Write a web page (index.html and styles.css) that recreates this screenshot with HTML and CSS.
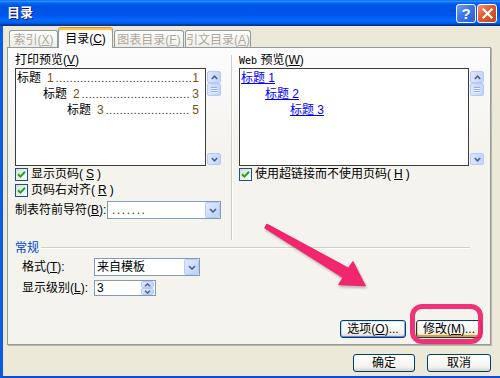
FILE: index.html
```html
<!doctype html>
<html lang="zh-CN">
  <head>
    <meta charset="UTF-8" />
    <title>目录</title>
    <link rel="stylesheet" href="styles.css">
  </head>
  <body>
    <div class="window">
      <!-- 标题栏 -->
      <div class="titlebar">
        <div class="title">目录</div>
        <div class="caption-buttons">
          <div class="cap-btn help">?</div>
          <div class="cap-btn close">
            <svg width="11" height="11" viewBox="0 0 11 11"><path d="M1.5 1.5 L9.5 9.5 M9.5 1.5 L1.5 9.5" stroke="#fff" stroke-width="2.2" stroke-linecap="square" fill="none"/></svg>
          </div>
        </div>
      </div>

      <div class="client">
        <!-- 选项卡 -->
        <div class="tabs">
          <div class="tab disabled tab-index">索引(<u>X</u>)</div>
          <div class="tab active tab-toc">目录(<u>C</u>)</div>
          <div class="tab disabled tab-figures">图表目录(<u>F</u>)</div>
          <div class="tab disabled tab-cites">引文目录(<u>A</u>)</div>
        </div>

        <div class="panel">
          <div class="previews">
            <!-- 打印预览 -->
            <div class="col col-print">
              <div class="label">打印预览(<u>V</u>)</div>
              <div class="preview-row">
                <div class="preview-box print-box">
                  <div class="toc-line level-1"><span class="toc-title">标题<em>1</em></span><span class="toc-dots">.......................................</span><span class="toc-page">1</span></div>
                  <div class="toc-line level-2"><span class="toc-title">标题<em>2</em></span><span class="toc-dots">...............................</span><span class="toc-page">3</span></div>
                  <div class="toc-line level-3"><span class="toc-title">标题<em>3</em></span><span class="toc-dots">........................</span><span class="toc-page">5</span></div>
                </div>
                <div class="scrollbar">
                  <div class="scroll-btn"><svg width="7" height="5" viewBox="0 0 7 5"><path d="M0.8 4 L3.5 1.2 L6.2 4" stroke="#4D6185" stroke-width="1.6" fill="none"/></svg></div>
                  <div class="scroll-thumb"><i></i><i></i><i></i></div>
                  <div class="scroll-space"></div>
                  <div class="scroll-btn"><svg width="7" height="5" viewBox="0 0 7 5"><path d="M0.8 1 L3.5 3.8 L6.2 1" stroke="#4D6185" stroke-width="1.6" fill="none"/></svg></div>
                </div>
              </div>
              <div class="check-row">
                <span class="checkbox"><svg width="9" height="9" viewBox="0 0 9 9"><path d="M1 4.2 L3.4 6.6 L8 1.8" stroke="#21A121" stroke-width="2" fill="none"/></svg></span>
                显示页码(<u>S</u>)
              </div>
              <div class="check-row">
                <span class="checkbox"><svg width="9" height="9" viewBox="0 0 9 9"><path d="M1 4.2 L3.4 6.6 L8 1.8" stroke="#21A121" stroke-width="2" fill="none"/></svg></span>
                页码右对齐(<u>R</u>)
              </div>
              <div class="leader-row">
                <span>制表符前导符(<u>B</u>):</span>
                <div class="combo leader-combo">
                  <span class="combo-text dots">.......</span>
                  <span class="combo-btn"><svg width="8" height="5" viewBox="0 0 8 5"><path d="M1 1 L4 4 L7 1" stroke="#4D6185" stroke-width="1.6" fill="none"/></svg></span>
                </div>
              </div>
            </div>

            <div class="vsep"></div>

            <!-- Web 预览 -->
            <div class="col col-web">
              <div class="label"><span class="web">Web</span> 预览(<u>W</u>)</div>
              <div class="preview-row">
                <div class="preview-box web-box">
                  <div class="web-line level-1"><a>标题 1</a></div>
                  <div class="web-line level-2"><a>标题 2</a></div>
                  <div class="web-line level-3"><a>标题 3</a></div>
                </div>
                <div class="scrollbar">
                  <div class="scroll-btn"><svg width="7" height="5" viewBox="0 0 7 5"><path d="M0.8 4 L3.5 1.2 L6.2 4" stroke="#4D6185" stroke-width="1.6" fill="none"/></svg></div>
                  <div class="scroll-thumb"><i></i><i></i><i></i></div>
                  <div class="scroll-space"></div>
                  <div class="scroll-btn"><svg width="7" height="5" viewBox="0 0 7 5"><path d="M0.8 1 L3.5 3.8 L6.2 1" stroke="#4D6185" stroke-width="1.6" fill="none"/></svg></div>
                </div>
              </div>
              <div class="check-row">
                <span class="checkbox"><svg width="9" height="9" viewBox="0 0 9 9"><path d="M1 4.2 L3.4 6.6 L8 1.8" stroke="#21A121" stroke-width="2" fill="none"/></svg></span>
                使用超链接而不使用页码(<u>H</u>)
              </div>
            </div>
          </div>

          <!-- 常规 -->
          <div class="group-title"><span>常规</span><span class="group-line"></span></div>

          <div class="form">
            <div class="form-row row-format">
              <span class="form-label">格式(<u>T</u>):</span>
              <div class="combo format-combo">
                <span class="combo-text">来自模板</span>
                <span class="combo-btn"><svg width="8" height="5" viewBox="0 0 8 5"><path d="M1 1 L4 4 L7 1" stroke="#4D6185" stroke-width="1.6" fill="none"/></svg></span>
              </div>
            </div>
            <div class="form-row row-level">
              <span class="form-label">显示级别(<u>L</u>):</span>
              <div class="spinner">
                <span class="combo-text">3</span>
                <span class="spin-btns">
                  <span class="spin-btn"><svg width="7" height="4" viewBox="0 0 7 4"><path d="M1 3.3 L3.5 0.9 L6 3.3" stroke="#4D6185" stroke-width="1.4" fill="none"/></svg></span>
                  <span class="spin-btn"><svg width="7" height="4" viewBox="0 0 7 4"><path d="M1 0.7 L3.5 3.1 L6 0.7" stroke="#4D6185" stroke-width="1.4" fill="none"/></svg></span>
                </span>
              </div>
            </div>
          </div>

          <div class="panel-buttons">
            <button class="btn btn-options">选项(<u>O</u>)...</button>
            <button class="btn btn-modify">修改(<u>M</u>)...</button>
          </div>
        </div>

        <div class="dialog-buttons">
          <button class="btn btn-ok">确定</button>
          <button class="btn btn-cancel">取消</button>
        </div>
      </div>

      <!-- 标注：箭头和圈 -->
      <svg class="arrow" width="500" height="378" viewBox="0 0 500 378">
        <polygon points="267,224.5 348.5,268.5 353,262 365,285.5 339,284.5 343.5,277.5 265,227.8" fill="#F2266C" stroke="#F2266C" stroke-width="1.5" stroke-linejoin="round"/>
      </svg>
      <div class="ring"></div>
    </div>
  </body>
</html>
```

FILE: styles.css
```css
* {
  margin: 0;
  padding: 0;
  box-sizing: border-box;
}

body {
  width: 500px;
  height: 378px;
  overflow: hidden;
  font-family: "Liberation Sans", "Noto Sans CJK SC", sans-serif;
  font-size: 12px;
  line-height: 14px;
  color: #000;
  background: #ECE9D8;
}

u {
  text-decoration: underline;
}

button {
  font: inherit;
  color: inherit;
}

.window {
  position: relative;
  width: 500px;
  height: 378px;
  background: #ECE9D8;
}

/* 标题栏 */
.titlebar {
  height: 26px;
  display: flex;
  justify-content: space-between;
  padding: 0 3px 0 7px;
  background: linear-gradient(to bottom, #0058EE 0%, #3593FF 4%, #288EFF 6%, #127DFF 8%, #036FFC 10%, #0262EE 14%, #0057E5 20%, #0054E3 24%, #0055EB 56%, #005BF5 66%, #026AFE 76%, #0062EF 86%, #0052D6 92%, #0040AB 94%, #003092 100%);
}

.title {
  color: #fff;
  font-weight: bold;
  font-size: 13px;
  line-height: 26px;
  text-shadow: 1px 1px #0F1089;
}

.caption-buttons {
  display: flex;
  gap: 1px;
  margin-top: 4px;
}

.cap-btn {
  width: 20px;
  height: 19px;
  border: 1px solid #fff;
  border-radius: 3px;
  display: flex;
  align-items: center;
  justify-content: center;
  color: #fff;
}

.cap-btn.help {
  background: linear-gradient(135deg, #6FA2F9 0%, #3B75EC 45%, #2A5FD8 100%);
  font-weight: bold;
  font-size: 15px;
}

.cap-btn.close {
  background: linear-gradient(135deg, #F29676 0%, #E2592E 45%, #C94417 100%);
}

/* 对话框主体 */
.client {
  height: 352px;
  border-left: 3px solid #0B5AE6;
  border-bottom: 2px solid #0B4FD9;
  padding: 1px 9px 0 4px;
}

/* 选项卡 */
.tabs {
  position: relative;
  z-index: 1;
  display: flex;
  align-items: flex-end;
  height: 21px;
  padding-left: 2px;
}

.tab {
  height: 17px;
  margin-bottom: 1px;
  padding-top: 2px;
  border: 1px solid #919B9C;
  border-bottom: none;
  border-radius: 3px 3px 0 0;
  background: linear-gradient(#FFFFFF, #F5F5F2 60%, #ECEBE6);
  text-align: center;
  white-space: nowrap;
}

.tab.disabled {
  color: #ACA899;
}

.tab.active {
  height: 21px;
  margin-bottom: 0;
  padding-top: 4px;
  border-top: 1px solid #E68B2C;
  background: #FCFCFE;
  box-shadow: inset 0 2px 0 #FFC73C;
}

.tab-index { width: 49px; }
.tab-toc { width: 55px; }
.tab-figures { width: 70px; margin-left: 1px; }
.tab-cites { width: 66px; margin-left: 1px; }

.panel {
  position: relative;
  height: 298px;
  margin-top: -1px;
  padding: 0 6px 0 7px;
  border: 1px solid #919B9C;
  background: linear-gradient(#FCFCFE, #F4F3EE 35%);
  box-shadow: 1px 1px 0 #B9B7A8;
}

/* 预览区域 */
.previews {
  display: flex;
  height: 192px;
  padding-top: 5px;
}

.col-print {
  width: 206px;
}

.vsep {
  width: 2px;
  height: 185px;
  margin: 2px 0 0 10px;
  border-left: 1px solid #D0D0BF;
  border-right: 1px solid #fff;
}

.col-web {
  width: 245px;
  margin-left: 6px;
}

.label {
  height: 14px;
  margin-bottom: 1px;
  white-space: nowrap;
}

.label .web {
  font-family: "DejaVu Sans Mono", monospace;
  font-size: 10px;
}

.preview-row {
  display: flex;
  gap: 1px;
  height: 98px;
}

.preview-box {
  flex: 1;
  border: 1px solid #3C3C3C;
  background: #fff;
  padding: 1px 6px 0 1px;
  overflow: hidden;
}

.toc-line {
  display: flex;
  align-items: baseline;
  height: 16px;
  line-height: 16px;
  white-space: nowrap;
}

.toc-line em,
.toc-page {
  font-style: normal;
  color: #7A4E14;
}

.toc-line em {
  margin-left: 6px;
}

/* 前导符：等宽字体，每个点 3.5px */
.toc-dots {
  flex: 1;
  overflow: hidden;
  margin-left: 1px;
  font-family: "Liberation Mono", monospace;
  font-size: 8px;
  font-weight: bold;
  letter-spacing: -1.3px;
  color: #3A2A10;
}

.toc-page {
  width: 7px;
  text-align: right;
}

.level-2 { padding-left: 26px; }
.level-3 { padding-left: 50px; }

.web-line {
  height: 16px;
  line-height: 16px;
}

.web-line a {
  color: #0000FF;
  text-decoration: underline;
}

.web-line.level-2 { padding-left: 24px; }
.web-line.level-3 { padding-left: 49px; }

/* 滚动条 */
.scrollbar {
  width: 14px;
  display: flex;
  flex-direction: column;
  padding: 3px 0 1px;
}

.scroll-btn,
.scroll-thumb {
  height: 12px;
  border: 1px solid #B7CAF5;
  border-radius: 2px;
  background: linear-gradient(90deg, #DCE7FE, #C3D4FB);
  display: flex;
  align-items: center;
  justify-content: center;
}

.scroll-thumb {
  height: 13px;
  flex-direction: column;
  gap: 1px;
}

.scroll-thumb i {
  width: 6px;
  height: 1px;
  background: #8CB0F8;
  box-shadow: 0 1px 0 #EEF4FE;
}

.scroll-space {
  flex: 1;
}

/* 复选框 */
.check-row {
  display: flex;
  align-items: center;
  gap: 3px;
  height: 16px;
  white-space: nowrap;
}

.checkbox {
  width: 13px;
  height: 13px;
  border: 1px solid #1C5180;
  background: linear-gradient(135deg, #DCDCD7, #FFFFFF);
  display: flex;
  align-items: center;
  justify-content: center;
}

.leader-row {
  display: flex;
  align-items: center;
  justify-content: space-between;
  height: 18px;
  margin-top: 3px;
  white-space: nowrap;
}

/* 下拉框 */
.combo,
.spinner {
  height: 18px;
  border: 1px solid #7F9DB9;
  background: #fff;
  display: flex;
  align-items: center;
  padding-left: 2px;
}

.combo-text {
  flex: 1;
  white-space: nowrap;
}

.combo-text.dots {
  padding-left: 2px;
  letter-spacing: 1.6px;
  color: #333;
}

.combo-btn {
  width: 15px;
  height: 16px;
  border: 1px solid #B7CAF5;
  border-radius: 2px;
  background: linear-gradient(135deg, #E1EAFE, #BED1FB);
  display: flex;
  align-items: center;
  justify-content: center;
}

.leader-combo {
  width: 114px;
}

.format-combo {
  width: 106px;
}

.spinner {
  width: 62px;
  height: 16px;
  padding-right: 1px;
}

.spin-btns {
  display: flex;
  flex-direction: column;
  width: 13px;
  height: 14px;
}

.spin-btn {
  flex: 1;
  border: 1px solid #B7CAF5;
  border-radius: 2px;
  background: linear-gradient(135deg, #E1EAFE, #BED1FB);
  display: flex;
  align-items: center;
  justify-content: center;
}

/* 常规 */
.group-title {
  display: flex;
  align-items: center;
  gap: 2px;
  height: 14px;
  margin: 1px 14px 0 0;
  color: #0046D5;
}

.group-line {
  flex: 1;
  height: 2px;
  border-top: 1px solid #D0D0BF;
  border-bottom: 1px solid #fff;
}

.form {
  padding-left: 7px;
}

.form-row {
  display: flex;
  align-items: center;
}

.row-format {
  margin-top: 3px;
}

.row-level {
  margin-top: 4px;
}

.form-label {
  width: 72px;
  white-space: nowrap;
}

/* 按钮 */
.panel-buttons {
  display: flex;
  justify-content: flex-end;
  gap: 10px;
  margin-top: 24px;
  padding-right: 2px;
}

.btn {
  width: 66px;
  height: 18px;
  border: 1px solid #003C74;
  border-radius: 3px;
  background: linear-gradient(#FFFFFF, #F3F3EE 75%, #D8D2C6);
  line-height: 14px;
  white-space: nowrap;
}

.btn-options {
  box-shadow: inset 0 1px 0 #CEE7FF, inset 0 -1px 0 #6982EE, inset 1px 0 0 #BCD4F6, inset -1px 0 0 #89ADE4;
}

.btn-modify {
  box-shadow: inset 0 1px 0 #FFF0CF, inset 0 -2px 0 #E5A01A, inset 1px 0 0 #FBD848, inset -1px 0 0 #F8B330;
}

.dialog-buttons {
  display: flex;
  justify-content: flex-end;
  gap: 12px;
  margin-top: 9px;
}

.btn-ok {
  width: 62px;
}

.btn-cancel {
  width: 64px;
}

/* 标注 */
.arrow {
  position: absolute;
  left: 0;
  top: 0;
  pointer-events: none;
  filter: drop-shadow(1px 2px 1px rgba(0, 0, 0, 0.25));
}

.ring {
  position: absolute;
  left: 410px;
  top: 304px;
  width: 73px;
  height: 40px;
  border: 5px solid rgba(238, 30, 108, 0.9);
  border-radius: 12px;
  pointer-events: none;
}
```
